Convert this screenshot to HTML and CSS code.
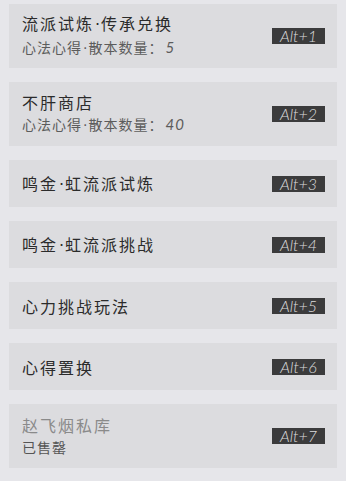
FILE: index.html
```html
<!DOCTYPE html>
<html lang="zh-CN">
<head>
    <meta charset="UTF-8">
    <meta name="viewport" content="width=device-width, initial-scale=1.0">
    <title>快捷入口</title>
    <link rel="stylesheet" href="styles.css">
</head>
<body>
    <div class="list">
        <div class="item tall">
            <div class="text">
                <div class="title">流派试炼<span class="dot">·</span>传承兑换</div>
                <div class="sub">心法心得<span class="dot">·</span>散本数量：<span class="num">5</span></div>
            </div>
            <span class="key">Alt+1</span>
        </div>
        <div class="item tall">
            <div class="text">
                <div class="title">不肝商店</div>
                <div class="sub">心法心得<span class="dot">·</span>散本数量：<span class="num">40</span></div>
            </div>
            <span class="key">Alt+2</span>
        </div>
        <div class="item">
            <div class="text">
                <div class="title">鸣金<span class="dot">·</span>虹流派试炼</div>
            </div>
            <span class="key">Alt+3</span>
        </div>
        <div class="item">
            <div class="text">
                <div class="title">鸣金<span class="dot">·</span>虹流派挑战</div>
            </div>
            <span class="key">Alt+4</span>
        </div>
        <div class="item">
            <div class="text">
                <div class="title">心力挑战玩法</div>
            </div>
            <span class="key">Alt+5</span>
        </div>
        <div class="item">
            <div class="text">
                <div class="title">心得置换</div>
            </div>
            <span class="key">Alt+6</span>
        </div>
        <div class="item tall disabled">
            <div class="text">
                <div class="title">赵飞烟私库</div>
                <div class="sub">已售罄</div>
            </div>
            <span class="key">Alt+7</span>
        </div>
    </div>
</body>
</html>
```

FILE: styles.css
```css
body {
    margin: 0;
    background-color: #e6e6ea;
    font-family: "Noto Sans CJK SC", "Noto Sans", sans-serif;
}
.list {
    display: flex;
    flex-direction: column;
    gap: 14px;
    padding: 4px 9px 0 9px;
}
.item {
    display: flex;
    align-items: center;
    justify-content: space-between;
    height: 47px;
    padding: 0 12px 0 13px;
    background-color: #dcdcdf;
    box-sizing: border-box;
}
.item.tall {
    height: 64px;
}
.title {
    font-size: 16px;
    line-height: 22px;
    color: #2b2b2b;
    letter-spacing: 2px;
}
.sub {
    font-size: 14px;
    line-height: 23px;
    color: #5c5c5c;
    letter-spacing: 1px;
}
.dot {
    font-family: "DejaVu Sans", sans-serif;
    letter-spacing: 0;
    margin: 0 1px;
}
.num {
    font-family: Lato, "Liberation Sans", sans-serif;
    font-style: italic;
    font-size: 15px;
    margin-left: 2px;
}
.disabled .title {
    color: #8a8a8a;
}
.disabled .sub {
    color: #555;
}
.key {
    display: inline-block;
    width: 53px;
    height: 16px;
    line-height: 16px;
    background-color: #3b3b3c;
    color: #dcdcdc;
    font-family: Lato, "Liberation Sans", sans-serif;
    font-style: italic;
    font-weight: 300;
    font-size: 16px;
    text-align: center;
}
```
